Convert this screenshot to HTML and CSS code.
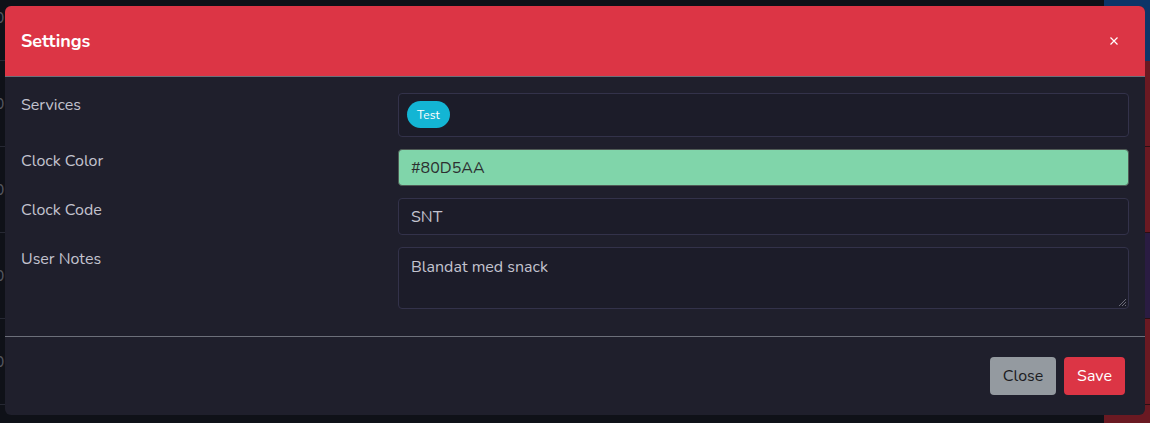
FILE: index.html
```html
<!DOCTYPE html>
<html>
<head>
<meta charset="utf-8">
<link rel="stylesheet" href="styles.css">
</head>
<body>
<div class="page">
  <div class="table">
    <div class="trow first"><span class="cell">10:00</span></div>
    <div class="trow"><span class="cell">11:00</span></div>
    <div class="trow"><span class="cell">12:00</span></div>
    <div class="trow"><span class="cell">13:00</span></div>
    <div class="trow"><span class="cell">14:00</span></div>
    <div class="trow rest"></div>
  </div>
  <div class="side">
    <div class="blk blue first"></div>
    <div class="blk red"></div>
    <div class="blk red"></div>
    <div class="blk purple"></div>
    <div class="blk red"></div>
    <div class="blk red rest"></div>
  </div>
</div>

<div class="modal">
  <div class="modal-header">
    <h5 class="modal-title">Settings</h5>
    <button class="btn-close" aria-label="Close">
      <svg width="8" height="8" viewBox="0 0 8 8"><path d="M0.5 0.5 L7.5 7.5 M7.5 0.5 L0.5 7.5" stroke="#fff" stroke-width="1.2" fill="none"/></svg>
    </button>
  </div>
  <div class="modal-body">
    <div class="row">
      <label class="label">Services</label>
      <div class="field"><div class="tags"><span class="badge">Test</span></div></div>
    </div>
    <div class="row">
      <label class="label">Clock Color</label>
      <div class="field"><div class="input color">#80D5AA</div></div>
    </div>
    <div class="row">
      <label class="label">Clock Code</label>
      <div class="field"><div class="input">SNT</div></div>
    </div>
    <div class="row">
      <label class="label">User Notes</label>
      <div class="field"><div class="input textarea">Blandat med snack
        <svg class="grip" width="9" height="9" viewBox="0 0 9 9"><path d="M8 1 L1 8 M8 4 L4 8 M8 7 L7 8" stroke="#6b6b78" stroke-width="1"/></svg>
      </div></div>
    </div>
  </div>
  <div class="modal-footer">
    <button class="btn btn-secondary">Close</button>
    <button class="btn btn-danger">Save</button>
  </div>
</div>
</body>
</html>
```

FILE: styles.css
```css
* { box-sizing: border-box; }
html, body { margin: 0; padding: 0; }
body {
  width: 1150px;
  height: 423px;
  overflow: hidden;
  background: #0f1118;
  font-family: "Nunito", "Open Sans", "Noto Sans", sans-serif;
  position: relative;
}
.page { display: flex; height: 423px; overflow: hidden; }
.table { width: 1104px; display: flex; flex-direction: column; }
.trow {
  height: 86px;
  flex: none;
  border-bottom: 1px solid #262833;
  display: flex;
  align-items: center;
  color: #555761;
  font-size: 16px;
}
.trow.first { height: 61px; align-items: flex-start; padding-top: 7px; }
.trow.rest { flex: 1; height: auto; border-bottom: none; }
.trow .cell { margin-left: -28px; }
.side { width: 46px; display: flex; flex-direction: column; }
.blk { height: 86px; flex: none; border-bottom: 1px solid #2a0f14; }
.blk.first { height: 61px; border-bottom: none; }
.blk.rest { flex: 1; height: auto; border-bottom: none; }
.blk.blue { background: #0d3568; }
.blk.red { background: #6a1922; }
.blk.purple { background: #2a1c42; }

.modal {
  position: absolute;
  left: 5px;
  top: 6px;
  width: 1140px;
  background: #1f1f2c;
  border-radius: 6px;
  overflow: hidden;
}
.modal-header {
  height: 71px;
  background: #dc3545;
  border-bottom: 1px solid #6c6f7a;
  display: flex;
  align-items: center;
  justify-content: space-between;
  padding: 0 16px;
}
.modal-title {
  margin: 0;
  color: #fff;
  font-size: 18px;
  font-weight: 700;
}
.btn-close {
  background: none;
  border: none;
  padding: 0;
  width: 8px;
  height: 8px;
  margin-right: 11px;
  display: flex;
}
.modal-body { padding: 16px 16px 4px; }
.row { display: flex; margin-bottom: 12px; }
.row:last-child { margin-bottom: 23px; }
.label {
  width: 377px;
  color: #c3c3cf;
  font-size: 16px;
  line-height: 22px;
  padding-top: 1px;
}
.field { flex: 1; }
.tags {
  height: 44px;
  border: 1px solid #33324a;
  border-radius: 4px;
  background: #1c1c29;
  padding: 7px 8px;
}
.badge {
  display: inline-flex;
  align-items: center;
  height: 27px;
  padding: 0 10px;
  border-radius: 14px;
  background: #13b5d4;
  color: #fff;
  font-size: 12px;
}
.input {
  height: 37px;
  border: 1px solid #33324a;
  border-radius: 4px;
  background: #1c1c29;
  color: #c3c3cf;
  font-size: 16px;
  padding: 0 12px;
  display: flex;
  align-items: center;
}
.input.color {
  background: #80d5aa;
  border-color: #4f5a55;
  color: #2c2f30;
}
.input.textarea {
  height: 62px;
  align-items: flex-start;
  padding-top: 8px;
  position: relative;
}
.grip { position: absolute; right: 1px; bottom: 1px; }
.modal-footer {
  border-top: 1px solid #6c6f7a;
  padding: 16px 16px;
  display: flex;
  justify-content: flex-end;
}
.btn {
  margin: 4px;
  height: 38px;
  border: none;
  border-radius: 4px;
  font-family: inherit;
  font-size: 16px;
  padding: 0 12px;
}
.btn-secondary { background: #949aa0; color: #1b1c22; width: 66px; }
.btn-danger { background: #dc3545; color: #fff; width: 61px; }
```
